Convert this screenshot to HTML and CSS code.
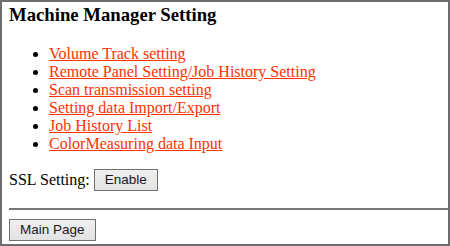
FILE: index.html
```html
<!DOCTYPE html>
<html lang="en">
<head>
  <meta charset="UTF-8" />
  <title>Machine Manager Setting</title>
  <link rel="stylesheet" href="styles.css">
</head>
<body>
  <div class="frame">
    <h3>Machine Manager Setting</h3>
    <ul>
      <li><a href="#">Volume Track setting</a></li>
      <li><a href="#">Remote Panel Setting/Job History Setting</a></li>
      <li><a href="#">Scan transmission setting</a></li>
      <li><a href="#">Setting data Import/Export</a></li>
      <li><a href="#">Job History List</a></li>
      <li><a href="#">ColorMeasuring data Input</a></li>
    </ul>
    <p class="ssl">SSL Setting: <button type="button">Enable</button></p>
    <hr>
    <button type="button">Main Page</button>
  </div>
</body>
</html>
```

FILE: styles.css
```css
html, body {
  margin: 0;
  padding: 0;
}
body {
  font-family: "Liberation Serif", "Times New Roman", serif;
  font-size: 16px;
  background: white;
}
.frame {
  box-sizing: border-box;
  width: 450px;
  height: 246px;
  border: 2px solid #6e6e6e;
  padding: 2px 0 0 7px;
  overflow: hidden;
}
h3 {
  font-size: 18.72px;
  margin: 0 0 18.72px 0;
}
ul {
  margin: 0 0 16px 0;
  padding-left: 40px;
}
a {
  color: #ff3300;
}
.ssl {
  margin: 0 0 17px 0;
}
hr {
  border: none;
  border-top: 2px solid #777;
  margin: 0 0 9px 0;
}
button {
  font-family: Arial, "Liberation Sans", sans-serif;
  font-size: 13.5px;
  color: #1a1a1a;
  background: linear-gradient(#efefef, #e3e3e3);
  border: 1px solid #707070;
  height: 22px;
  padding: 0 10px;
  margin: 0;
}
```
